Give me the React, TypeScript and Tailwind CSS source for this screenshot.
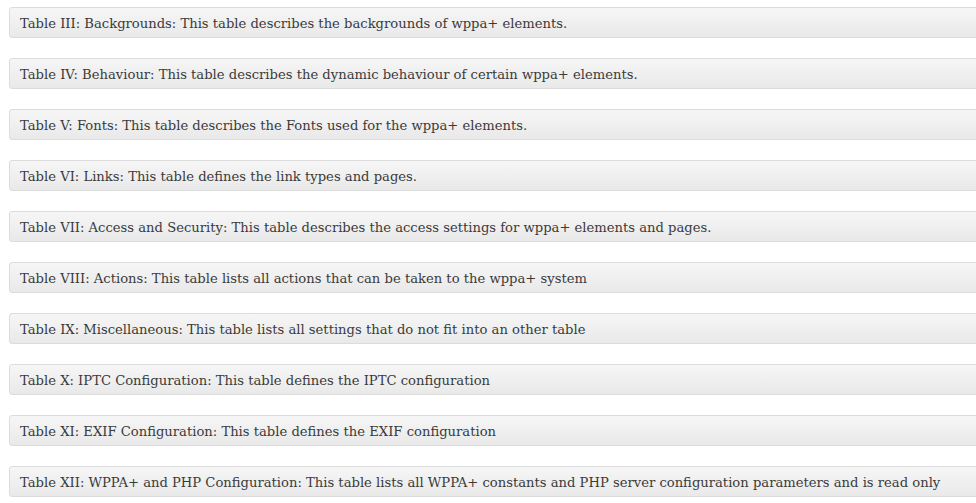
const rows = [
  "Table III: Backgrounds: This table describes the backgrounds of wppa+ elements.",
  "Table IV: Behaviour: This table describes the dynamic behaviour of certain wppa+ elements.",
  "Table V: Fonts: This table describes the Fonts used for the wppa+ elements.",
  "Table VI: Links: This table defines the link types and pages.",
  "Table VII: Access and Security: This table describes the access settings for wppa+ elements and pages.",
  "Table VIII: Actions: This table lists all actions that can be taken to the wppa+ system",
  "Table IX: Miscellaneous: This table lists all settings that do not fit into an other table",
  "Table X: IPTC Configuration: This table defines the IPTC configuration",
  "Table XI: EXIF Configuration: This table defines the EXIF configuration",
  "Table XII: WPPA+ and PHP Configuration: This table lists all WPPA+ constants and PHP server configuration parameters and is read only",
];

export default function App() {
  return (
    <div className="w-[976px] h-[503px] overflow-hidden bg-white pt-[7px] pl-[9px]">
      <div className="flex flex-col gap-[20px] w-[1000px]">
        {rows.map((r) => (
          <div
            key={r}
            className="h-[31px] flex items-center pl-[10px] pt-[3px] border border-[#dcdcdc] rounded-[3px] bg-gradient-to-b from-[#f6f6f6] to-[#e9e9e9] text-[#3a3a3a] text-[13.15px] whitespace-nowrap"
            style={{ fontFamily: '"DejaVu Serif", serif' }}
          >
            {r}
          </div>
        ))}
      </div>
    </div>
  );
}
